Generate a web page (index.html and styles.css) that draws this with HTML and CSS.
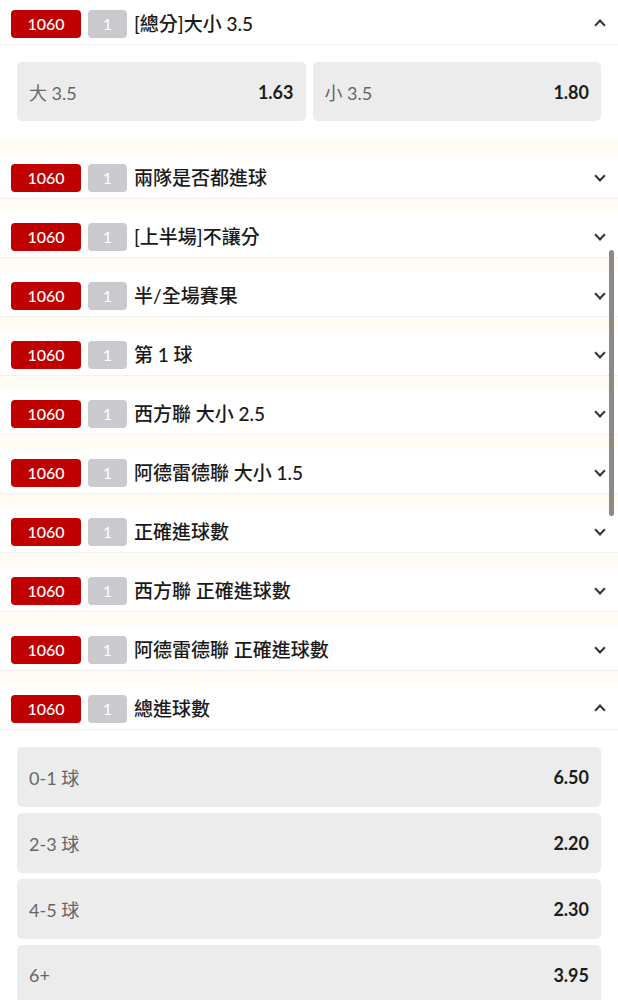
FILE: index.html
```html
<!DOCTYPE html>
<html lang="zh-Hant">
<head>
    <meta charset="UTF-8">
    <meta name="viewport" content="width=device-width, initial-scale=1.0">
    <title>投注選項</title>
    <link rel="stylesheet" href="styles.css">
</head>
<body>
    <div class="market-list">
        <div class="market open first">
            <div class="market-head">
                <span class="badge-code">1060</span>
                <span class="badge-num">1</span>
                <span class="market-title">[總分]大小 3.5</span>
                <span class="chevron up"></span>
            </div>
            <div class="odds-row">
                <div class="odd"><span class="odd-label">大 3.5</span><span class="odd-value">1.63</span></div>
                <div class="odd"><span class="odd-label">小 3.5</span><span class="odd-value">1.80</span></div>
            </div>
        </div>

        <div class="market">
            <div class="market-head">
                <span class="badge-code">1060</span>
                <span class="badge-num">1</span>
                <span class="market-title">兩隊是否都進球</span>
                <span class="chevron"></span>
            </div>
        </div>
        <div class="market">
            <div class="market-head">
                <span class="badge-code">1060</span>
                <span class="badge-num">1</span>
                <span class="market-title">[上半場]不讓分</span>
                <span class="chevron"></span>
            </div>
        </div>
        <div class="market">
            <div class="market-head">
                <span class="badge-code">1060</span>
                <span class="badge-num">1</span>
                <span class="market-title">半/全場賽果</span>
                <span class="chevron"></span>
            </div>
        </div>
        <div class="market">
            <div class="market-head">
                <span class="badge-code">1060</span>
                <span class="badge-num">1</span>
                <span class="market-title">第 1 球</span>
                <span class="chevron"></span>
            </div>
        </div>
        <div class="market">
            <div class="market-head">
                <span class="badge-code">1060</span>
                <span class="badge-num">1</span>
                <span class="market-title">西方聯 大小 2.5</span>
                <span class="chevron"></span>
            </div>
        </div>
        <div class="market">
            <div class="market-head">
                <span class="badge-code">1060</span>
                <span class="badge-num">1</span>
                <span class="market-title">阿德雷德聯 大小 1.5</span>
                <span class="chevron"></span>
            </div>
        </div>
        <div class="market">
            <div class="market-head">
                <span class="badge-code">1060</span>
                <span class="badge-num">1</span>
                <span class="market-title">正確進球數</span>
                <span class="chevron"></span>
            </div>
        </div>
        <div class="market">
            <div class="market-head">
                <span class="badge-code">1060</span>
                <span class="badge-num">1</span>
                <span class="market-title">西方聯 正確進球數</span>
                <span class="chevron"></span>
            </div>
        </div>
        <div class="market">
            <div class="market-head">
                <span class="badge-code">1060</span>
                <span class="badge-num">1</span>
                <span class="market-title">阿德雷德聯 正確進球數</span>
                <span class="chevron"></span>
            </div>
        </div>

        <div class="market open">
            <div class="market-head">
                <span class="badge-code">1060</span>
                <span class="badge-num">1</span>
                <span class="market-title">總進球數</span>
                <span class="chevron up"></span>
            </div>
            <div class="odds-col">
                <div class="odd"><span class="odd-label">0-1 球</span><span class="odd-value">6.50</span></div>
                <div class="odd"><span class="odd-label">2-3 球</span><span class="odd-value">2.20</span></div>
                <div class="odd"><span class="odd-label">4-5 球</span><span class="odd-value">2.30</span></div>
                <div class="odd"><span class="odd-label">6+</span><span class="odd-value">3.95</span></div>
            </div>
        </div>
    </div>
    <div class="scroll-thumb"></div>
</body>
</html>
```

FILE: styles.css
```css
body {
    margin: 0;
    padding: 0;
    background-color: #fffcf3;
    font-family: Lato, "Noto Sans CJK TC", sans-serif;
    color: #222;
    height: 1000px;
    overflow: hidden;
}

.market-list {
    display: flex;
    flex-direction: column;
    gap: 14px;
}

.market {
    background-color: #fff;
}

.market.open {
    padding-bottom: 2px;
}

.market.first {
    margin-bottom: 2px;
}

.market-head {
    display: flex;
    align-items: center;
    height: 45px;
    box-sizing: border-box;
    padding: 4px 14px 0 11px;
    border-bottom: 1px solid #f1f1f1;
}

.badge-code {
    background-color: #c00000;
    color: #fff;
    width: 70px;
    height: 28px;
    border-radius: 4px;
    font-size: 16px;
    font-weight: 500;
    line-height: 28px;
    text-align: center;
}

.badge-num {
    background-color: #c9c9ce;
    color: #fff;
    width: 39px;
    height: 28px;
    margin-left: 7px;
    border-radius: 4px;
    font-size: 16px;
    line-height: 28px;
    text-align: center;
}

.market-title {
    flex: 1;
    margin-left: 7px;
    margin-bottom: 4px;
    font-size: 19px;
    font-weight: 500;
    color: #1a1a1a;
}

.chevron {
    width: 6px;
    height: 6px;
    border-right: 2px solid #333;
    border-bottom: 2px solid #333;
    transform: rotate(45deg);
    margin-top: -4px;
}

.chevron.up {
    transform: rotate(-135deg);
    margin-top: 2px;
}

.odds-row {
    display: flex;
    gap: 7px;
    padding: 17px 17px 15px;
}

.odds-row .odd {
    flex: 1;
    height: 59px;
}

.odds-col {
    display: flex;
    flex-direction: column;
    gap: 6px;
    padding: 17px 17px 0;
}

.odds-col .odd {
    height: 60px;
}

.odd {
    display: flex;
    align-items: center;
    justify-content: space-between;
    padding: 0 12px;
    background-color: #ececec;
    border-radius: 5px;
    font-size: 18px;
}

.odd-label {
    color: #666;
}

.odd-value {
    color: #1c1c1c;
    font-weight: 700;
}

.scroll-thumb {
    position: absolute;
    top: 250px;
    left: 609px;
    width: 5px;
    height: 266px;
    border-radius: 3px;
    background-color: #8a8a8a;
}
```
